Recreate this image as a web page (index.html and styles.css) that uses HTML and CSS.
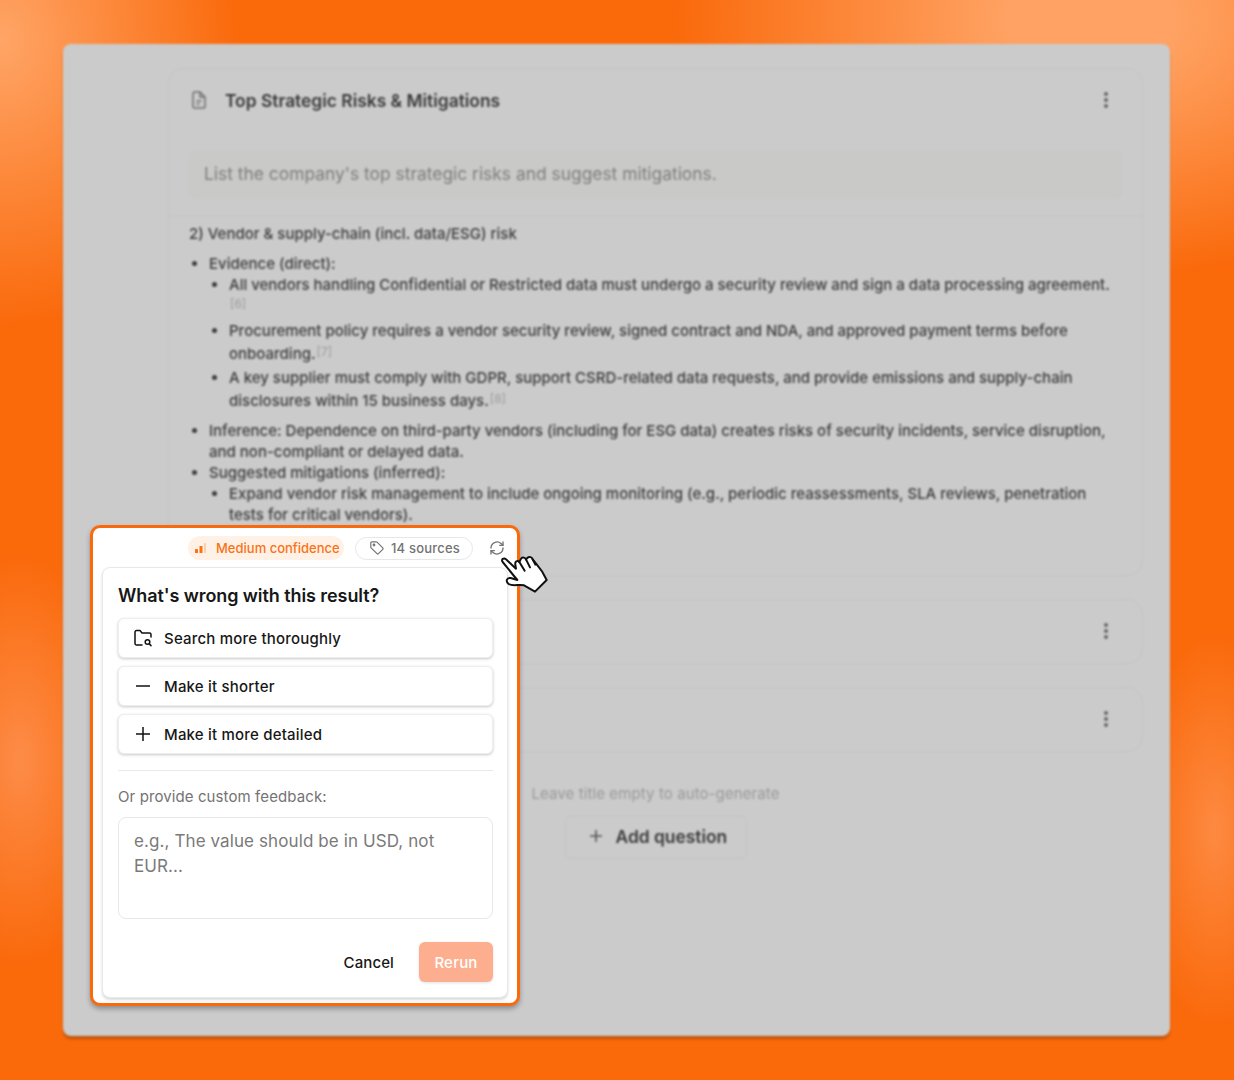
FILE: index.html
```html
<!DOCTYPE html>
<html lang="en">
<head>
    <meta charset="UTF-8">
    <meta name="viewport" content="width=device-width, initial-scale=1.0">
    <title>Rerun feedback</title>
    <link rel="stylesheet" href="styles.css">
</head>
<body>
    <div class="scene">
        <!-- Blurred app window behind the popover -->
        <div class="window">
            <div class="card card-open">
                <div class="card-header">
                    <svg class="doc-icon" width="20" height="20" viewBox="0 0 20 20" fill="none" stroke="#6f6f6f" stroke-width="1.5"><path d="M4 3.5C4 2.7 4.7 2 5.5 2H11l5 5v9.500C16 17.300 15.300 18 14.500 18h-9C4.700 18 4 17.300 4 16.500z"/><path d="M11 2v5h5M7.500 11h5M7.500 14h3"/></svg>
                    <h3>Top Strategic Risks &amp; Mitigations</h3>
                    <span class="kebab"><i></i><i></i><i></i></span>
                </div>
                <div class="question">List the company's top strategic risks and suggest mitigations.</div>
                <div class="answer">
                    <p>2) Vendor &amp; supply-chain (incl. data/ESG) risk</p>
                    <ul class="outer">
                        <li>Evidence (direct):
                            <ul class="inner">
                                <li class="wrap-cite">All vendors handling Confidential or Restricted data must undergo a security review and sign a data processing agreement. <sup>[6]</sup></li>
                                <li class="tall">Procurement policy requires a vendor security review, signed contract and NDA, and approved payment terms before onboarding.<sup>[7]</sup></li>
                                <li class="tall">A key supplier must comply with GDPR, support CSRD-related data requests, and provide emissions and supply-chain disclosures within 15 business days.<sup>[8]</sup></li>
                            </ul>
                        </li>
                        <li class="gap">Inference: Dependence on third-party vendors (including for ESG data) creates risks of security incidents, service disruption, and non-compliant or delayed data.</li>
                        <li>Suggested mitigations (inferred):
                            <ul class="inner">
                                <li>Expand vendor risk management to include ongoing monitoring (e.g., periodic reassessments, SLA reviews, penetration tests for critical vendors).</li>
                            </ul>
                        </li>
                    </ul>
                </div>
            </div>
            <div class="card card-closed"><span class="kebab"><i></i><i></i><i></i></span></div>
            <div class="card card-closed"><span class="kebab"><i></i><i></i><i></i></span></div>
            <div class="add-area">
                <p class="hint">Leave title empty to auto-generate</p>
                <button class="add-btn" type="button">
                    <svg width="16" height="16" viewBox="0 0 16 16" fill="none" stroke="#555" stroke-width="1.6"><path d="M8 2v12M2 8h12"/></svg>
                    Add question
                </button>
            </div>
        </div>

        <!-- Highlighted feedback popover -->
        <div class="popover">
            <div class="chips">
                <span class="chip-confidence">
                    <svg width="14" height="14" viewBox="0 0 14 14"><rect x="1" y="8" width="3" height="4" rx=".5" fill="#f97316"/><rect x="5.500" y="5" width="3" height="7" rx=".5" fill="#f97316"/><rect x="10" y="2" width="2" height="10" fill="#fbd0ae"/></svg>
                    Medium confidence
                </span>
                <span class="chip-sources">
                    <svg width="16" height="16" viewBox="0 0 16 16" fill="none" stroke="#737373" stroke-width="1.200" stroke-linejoin="round"><path d="M1.800 2.800c0-.6.4-1 1-1h4.400c.3 0 .6.100.8.300l5.800 5.800c.4.400.4 1 0 1.400l-4.400 4.400c-.4.400-1 .4-1.400 0L2.100 7.900c-.2-.2-.3-.5-.3-.8z"/><circle cx="5" cy="5" r=".8"/></svg>
                    14 sources
                </span>
                <svg class="refresh" width="16" height="16" viewBox="0 0 24 24" fill="none" stroke="#737373" stroke-width="2" stroke-linecap="round" stroke-linejoin="round"><path d="M3 12a9 9 0 0 1 15-6.700L21 8"/><path d="M21 3v5h-5"/><path d="M21 12a9 9 0 0 1-15 6.700L3 16"/><path d="M8 16H3v5"/></svg>
            </div>
            <div class="panel">
                <h4>What's wrong with this result?</h4>
                <div class="options">
                    <button class="option" type="button">
                        <svg width="20" height="20" viewBox="0 0 20 20" fill="none" stroke="#111" stroke-width="1.500" stroke-linejoin="round" stroke-linecap="round"><path d="M9 17H3.500C2.700 17 2 16.300 2 15.500V4c0-.8.700-1.500 1.500-1.500H7l2 2.500h7.500c.8 0 1.500.7 1.500 1.500V9"/><circle cx="14.500" cy="14" r="2.300"/><path d="M16.200 15.800 18 17.600"/></svg>
                        Search more thoroughly
                    </button>
                    <button class="option" type="button">
                        <svg width="20" height="20" viewBox="0 0 20 20" fill="none" stroke="#111" stroke-width="1.500"><path d="M3 10h14"/></svg>
                        Make it shorter
                    </button>
                    <button class="option" type="button">
                        <svg width="20" height="20" viewBox="0 0 20 20" fill="none" stroke="#111" stroke-width="1.500"><path d="M3 10h14M10 3v14"/></svg>
                        Make it more detailed
                    </button>
                </div>
                <div class="divider"></div>
                <label class="field-label">Or provide custom feedback:</label>
                <div class="feedback-input">e.g., The value should be in USD, not EUR...</div>
                <div class="actions">
                    <button class="btn-cancel" type="button">Cancel</button>
                    <button class="btn-rerun" type="button">Rerun</button>
                </div>
            </div>
        </div>

        <!-- Hand cursor -->
        <svg class="cursor" width="80" height="70" viewBox="0 0 240 210" fill="#fff" stroke="#111" stroke-width="6" stroke-linejoin="round" stroke-linecap="round">
            <path d="M68 96C62 88 72 82 78 88L108 116 106 104C104 94 112 90 118 96L122 88C126 80 134 82 138 88L142 84C148 78 156 82 158 88L166 98C180 114 192 132 200 150L165 185 132 166C118 162 98 170 86 162 76 154 80 142 92 144L112 150z"/>
            <path d="M118 96 134 122M138 88 150 112M158 88 166 104" fill="none"/>
        </svg>
    </div>
</body>
</html>
```

FILE: styles.css
```css
* {
    margin: 0;
    padding: 0;
    box-sizing: border-box;
}

html, body {
    width: 1234px;
    height: 1080px;
    overflow: hidden;
}

body {
    font-family: 'Inter', 'Liberation Sans', sans-serif;
    color: #111;
}

button {
    font-family: inherit;
    border: none;
    background: none;
}

.scene {
    position: relative;
    width: 1234px;
    height: 1080px;
    padding: 44px 63px;
    background-color: #fa690a;
    background-image:
        radial-gradient(ellipse 240px 290px at 0px 40px, #ffa567 0%, rgba(255, 165, 103, 0) 100%),
        radial-gradient(ellipse 100px 210px at 20px 760px, #fd8c48 0%, rgba(253, 140, 72, 0) 100%),
        radial-gradient(ellipse 420px 260px at 1090px 20px, #ffa263 20%, rgba(255, 162, 99, 0) 100%),
        radial-gradient(ellipse 80px 200px at 1215px 830px, #fd8a42 0%, rgba(253, 138, 66, 0) 100%);
}

/* blurred window */
.window {
    width: 1107px;
    height: 992px;
    padding: 24px 27px 0 105px;
    background: #cbcbcb;
    border-radius: 8px;
    box-shadow: 0 3px 2px rgba(120, 60, 10, 0.45);
    filter: blur(1.3px);
}

.card {
    border: 1px solid #c4c4c2;
    border-radius: 16px;
}

.card-open {
    height: 508px;
    margin-bottom: 23px;
    overflow: hidden;
}

.card-closed {
    height: 65px;
    margin-bottom: 23px;
    display: flex;
    align-items: center;
    justify-content: flex-end;
    padding: 0 34px 2px 0;
}

.card-header {
    display: flex;
    align-items: center;
    height: 62px;
    padding: 0 34px 0 20px;
}

.card-header h3 {
    font-size: 17.4px;
    font-weight: 600;
    color: #3a3a3a;
    margin-left: 16px;
    flex: 1;
}

.kebab {
    display: flex;
    flex-direction: column;
    gap: 2px;
}

.kebab i {
    width: 4px;
    height: 4px;
    border-radius: 50%;
    background: #666;
}

.question {
    margin: 19px 19px 0;
    height: 49px;
    padding: 0 16px;
    line-height: 47px;
    font-size: 17.4px;
    color: #7e7e7e;
    background: #c9c9c7;
    border-radius: 8px;
}

.answer {
    margin-top: 17px;
    padding: 6px 20px 0;
    border-top: 1px solid #c4c4c2;
    font-size: 15px;
    line-height: 21px;
    color: #3c3c3c;
    font-weight: 500;
}

.answer p {
    margin-bottom: 9px;
}

.answer ul {
    padding-left: 20px;
    list-style: disc;
}

.inner li.wrap-cite {
    margin-bottom: 3px;
}

.inner li.tall {
    line-height: 23px;
}

.inner li.tall + li.tall {
    margin-top: 1px;
}

.outer > li.gap {
    margin-top: 8px;
}

.answer sup {
    font-size: 12px;
    font-weight: 400;
    color: #9c9c9c;
    line-height: 0;
    vertical-align: 3px;
    margin-left: 1px;
}

.add-area {
    display: flex;
    flex-direction: column;
    align-items: center;
    margin-top: 33px;
}

.hint {
    font-size: 15px;
    line-height: 18px;
    letter-spacing: 0.1px;
    color: #9a9a9a;
    margin-bottom: 13px;
}

.add-btn {
    display: flex;
    align-items: center;
    gap: 12px;
    width: 182px;
    height: 43px;
    padding: 0 0 3px 22px;
    font-size: 17.4px;
    font-weight: 600;
    color: #3a3a3a;
    border: 1px solid #c4c4c2;
    border-radius: 6px;
}

/* popover */
.popover {
    position: absolute;
    left: 90px;
    top: 525px;
    width: 430px;
    height: 481px;
    padding: 0 9px 6px;
    background: #fff;
    border: 3px solid #fa6a0c;
    border-radius: 10px;
    box-shadow: 0 3px 5px rgba(0, 0, 0, 0.3);
}

.chips {
    display: flex;
    align-items: center;
    height: 39px;
    padding: 1px 0 0 86px;
}

.chip-confidence {
    display: flex;
    align-items: center;
    gap: 8px;
    width: 156px;
    height: 24px;
    padding-left: 6px;
    border-radius: 12px;
    background: #fff1e5;
    color: #f97316;
    font-size: 13px;
    font-weight: 500;
    white-space: nowrap;
}

.chip-sources {
    display: flex;
    align-items: center;
    gap: 6px;
    width: 118px;
    height: 23px;
    margin-left: 11px;
    padding-left: 13px;
    border: 1px solid #e7e7e7;
    border-radius: 12px;
    color: #737373;
    font-size: 13px;
    font-weight: 500;
    letter-spacing: 0.2px;
    white-space: nowrap;
}

.refresh {
    margin-left: 16px;
}

.panel {
    height: 431px;
    padding: 16px 14px 0 15px;
    border: 1px solid #e8e8e8;
    border-radius: 8px;
    background: #fff;
    box-shadow: 0 2px 3px rgba(0, 0, 0, 0.14);
}

.panel h4 {
    font-size: 18px;
    font-weight: 600;
    line-height: 24px;
    letter-spacing: -0.08px;
    color: #171717;
    margin-bottom: 10px;
}

.options {
    display: flex;
    flex-direction: column;
    gap: 8px;
}

.option {
    display: flex;
    align-items: center;
    gap: 11px;
    width: 375px;
    height: 40px;
    padding-left: 14px;
    font-size: 15px;
    font-weight: 500;
    letter-spacing: 0.2px;
    color: #171717;
    background: #fff;
    border: 1px solid #eeeeee;
    border-radius: 6px;
    box-shadow: 0 1px 3px rgba(0, 0, 0, 0.22);
}

.divider {
    height: 1px;
    margin: 16px 0 17px;
    background: #e9e9e9;
}

.field-label {
    display: block;
    font-size: 15px;
    line-height: 18px;
    letter-spacing: 0.1px;
    color: #737373;
    margin-bottom: 11px;
}

.feedback-input {
    height: 102px;
    padding: 11px 20px 11px 15px;
    font-size: 17px;
    line-height: 25px;
    letter-spacing: 0.1px;
    color: #7a7a7a;
    border: 1px solid #e8e8e8;
    border-radius: 8px;
}

.actions {
    display: flex;
    justify-content: flex-end;
    align-items: center;
    gap: 25px;
    margin-top: 23px;
}

.btn-cancel {
    font-size: 15px;
    font-weight: 500;
    letter-spacing: 0.1px;
    color: #171717;
}

.btn-rerun {
    width: 74px;
    height: 40px;
    font-size: 15px;
    font-weight: 500;
    letter-spacing: 0.2px;
    color: #fff;
    background: #fdae8e;
    border-radius: 6px;
    box-shadow: 0 1px 3px rgba(0, 0, 0, 0.12);
}

.cursor {
    position: absolute;
    left: 480px;
    top: 530px;
}
```
